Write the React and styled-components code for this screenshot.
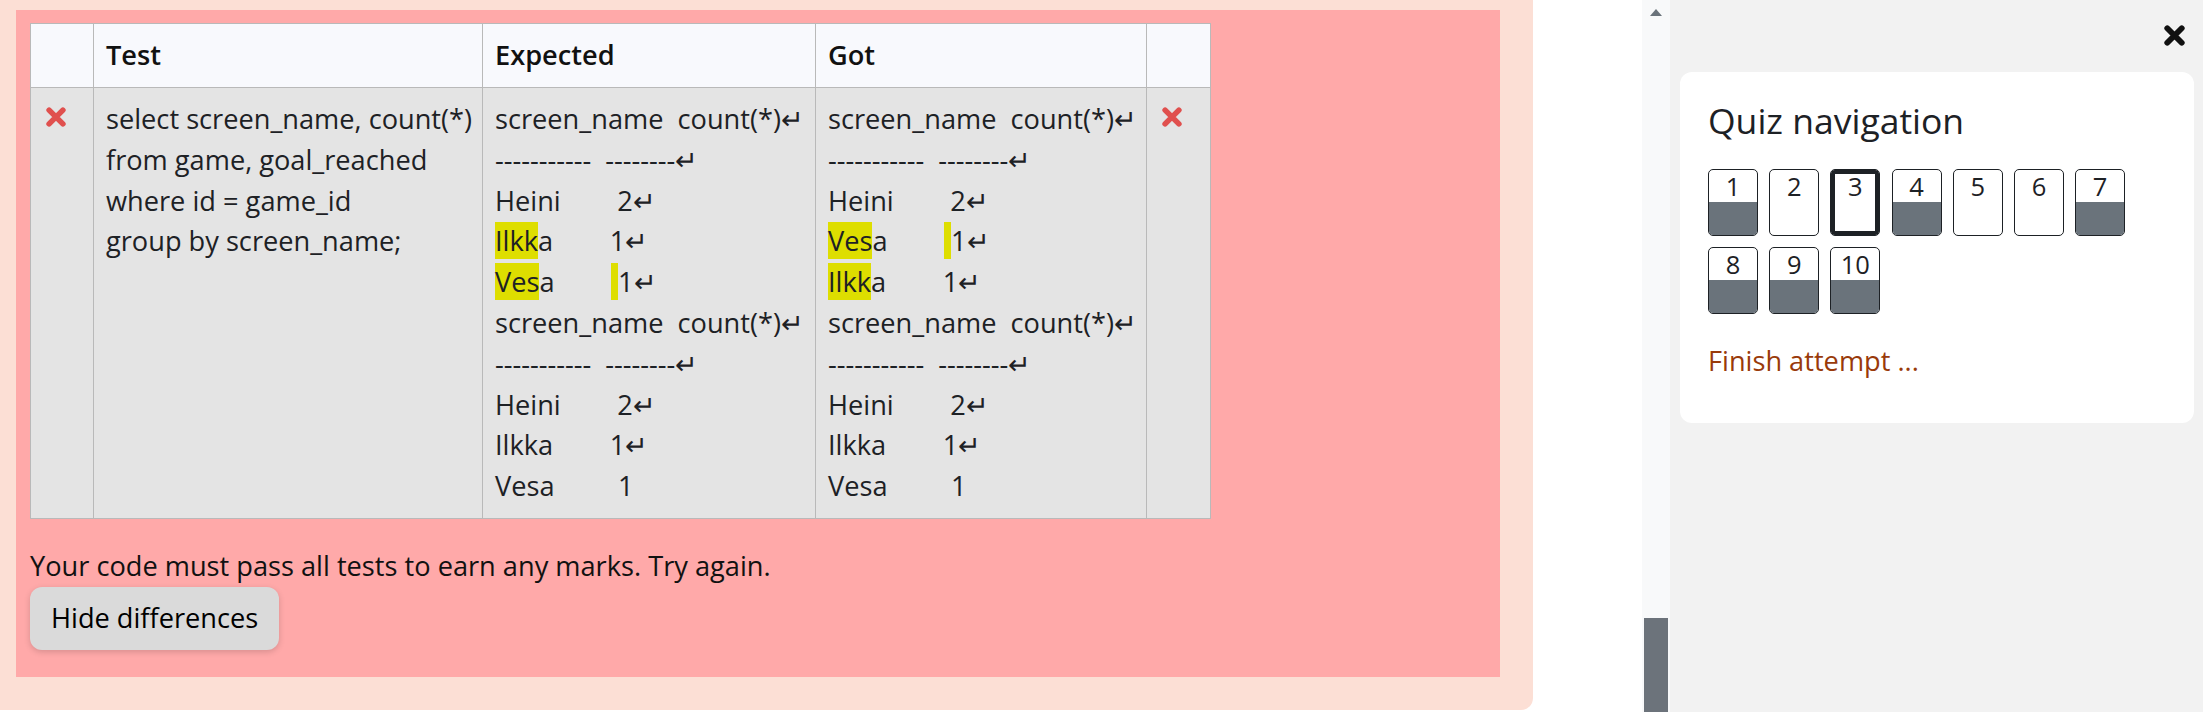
import React from 'react';
import styled, { createGlobalStyle } from 'styled-components';

const GlobalStyle = createGlobalStyle`
  html, body {
    margin: 0;
    padding: 0;
    background: #fff;
  }
  body {
    font-family: "Open Sans", "Liberation Sans", sans-serif;
    color: #1d2125;
  }
`;

const Page = styled.div`
  display: flex;
  width: 2203px;
  height: 712px;
  overflow: hidden;
`;

const Main = styled.div`
  flex: 0 0 1642px;
  background: #fff;
`;

const Outcome = styled.div`
  width: 1533px;
  height: 710px;
  box-sizing: border-box;
  padding: 10px 0 0 16px;
  background: #fcdfd5;
  border-bottom-right-radius: 12px;
`;

const Feedback = styled.div`
  width: 1484px;
  height: 667px;
  box-sizing: border-box;
  padding: 13px 14px;
  background: #ffa9a9;
  font-size: 27.2px;
  line-height: 1.5;
`;

const ResultTable = styled.table`
  border-collapse: collapse;
  table-layout: fixed;
  width: 1180px;
  font-size: 27.2px;
  line-height: 1.5;
`;

const HeadCell = styled.th`
  height: 64px;
  box-sizing: border-box;
  background: #f8f9fd;
  border: 1px solid #b9b9b9;
  padding: 0 12px;
  text-align: left;
  font-weight: 600;
  color: #111;
`;

const Cell = styled.td`
  background: #e4e4e4;
  border: 1px solid #b9b9b9;
  padding: 11px 12px;
  vertical-align: top;
  color: #1d2125;
`;

const IconLine = styled.div`
  height: 40.8px;
  display: flex;
  align-items: center;
  padding-left: 3px;
  margin-top: -2px;
`;

const Code = styled.div`
  white-space: pre;
`;

const Mark = styled.span`
  background: #dede00;
`;

const Message = styled.p`
  margin: 27px 0 0;
  color: #111;
`;

const Button = styled.button`
  display: block;
  margin: 0;
  padding: 11px 21px;
  border: none;
  border-radius: 12px;
  background: #dadada;
  font-family: inherit;
  font-size: 27.2px;
  line-height: 40.8px;
  color: #000;
  box-shadow: 0 2px 6px rgba(0, 0, 0, 0.16);
`;

const Track = styled.div`
  flex: 0 0 28px;
  background: #f8f9fa;
  display: flex;
  flex-direction: column;
  align-items: center;
`;

const ArrowUp = styled.div`
  margin-top: 9px;
  width: 0;
  height: 0;
  border-left: 6.5px solid transparent;
  border-right: 6.5px solid transparent;
  border-bottom: 7px solid #6a737b;
`;

const TrackSpace = styled.div`
  flex: 1;
`;

const Thumb = styled.div`
  width: 24px;
  height: 94px;
  background: #6c737b;
`;

const Drawer = styled.div`
  flex: 0 0 533px;
  box-sizing: border-box;
  padding: 0 9.5px 0 10px;
  background: #f2f2f2;
`;

const DrawerHeader = styled.div`
  height: 71.7px;
  display: flex;
  justify-content: flex-end;
  align-items: center;
  padding-right: 9px;
`;

const Card = styled.div`
  background: #fff;
  border-radius: 12px;
  padding: 27px 28px 42px;
`;

const Heading = styled.h2`
  margin: 0 0 28px;
  font-size: 35.5px;
  font-weight: 500;
  line-height: 1.2;
  color: #1d2125;
`;

const NavGrid = styled.div`
  display: flex;
  flex-wrap: wrap;
  gap: 11px 11.2px;
`;

const QnButton = styled.div`
  width: 50px;
  height: 67px;
  box-sizing: border-box;
  border: 1px solid #1d2125;
  border-radius: 5px;
  overflow: hidden;
  display: flex;
  flex-direction: column;
  background: #fff;
  box-shadow: ${p => (p.$current ? 'inset 0 0 0 4px #1d2125' : 'none')};
`;

const QnNumber = styled.div`
  height: 32px;
  text-align: center;
  font-size: 25.5px;
  line-height: 32px;
  color: #1d2125;
`;

const QnFill = styled.div`
  flex: 1;
  background: ${p => (p.$done ? '#6a737b' : 'transparent')};
`;

const FinishLink = styled.a`
  display: block;
  margin-top: 26.3px;
  font-size: 27.2px;
  line-height: 40.8px;
  color: #993a0a;
  text-decoration: none;
`;

const Cross = ({ color, size }) => (
  <svg width={size} height={size} viewBox="0 0 18 18">
    <path
      d="M2.8 2.8 L15.2 15.2 M15.2 2.8 L2.8 15.2"
      stroke={color}
      strokeWidth="5"
      strokeLinecap="round"
      fill="none"
    />
  </svg>
);

const expected = [
  'screen_name  count(*)↵',
  '-----------  --------↵',
  'Heini        2↵',
  '[Ilkk]a        1↵',
  '[Ves]a        [ ]1↵',
  'screen_name  count(*)↵',
  '-----------  --------↵',
  'Heini        2↵',
  'Ilkka        1↵',
  'Vesa         1',
];

const got = [
  'screen_name  count(*)↵',
  '-----------  --------↵',
  'Heini        2↵',
  '[Ves]a        [ ]1↵',
  '[Ilkk]a        1↵',
  'screen_name  count(*)↵',
  '-----------  --------↵',
  'Heini        2↵',
  'Ilkka        1↵',
  'Vesa         1',
];

const questions = [
  { n: 1, done: true },
  { n: 2 },
  { n: 3, current: true },
  { n: 4, done: true },
  { n: 5 },
  { n: 6 },
  { n: 7, done: true },
  { n: 8, done: true },
  { n: 9, done: true },
  { n: 10, done: true },
];

const DiffLine = ({ text }) => (
  <div>
    {text.split(/(\[[^\]]*\])/).filter(Boolean).map((part, i) =>
      part.startsWith('[') ? (
        <Mark key={i}>{part.slice(1, -1)}</Mark>
      ) : (
        <span key={i}>{part}</span>
      )
    )}
  </div>
);

const DiffCell = ({ lines }) => (
  <Cell>
    <Code>
      {lines.map((l, i) => (
        <DiffLine key={i} text={l} />
      ))}
    </Code>
  </Cell>
);

const App = () => (
  <Page>
    <GlobalStyle />
    <Main>
      <Outcome>
        <Feedback>
          <ResultTable>
            <colgroup>
              <col style={{ width: 63 }} />
              <col style={{ width: 389 }} />
              <col style={{ width: 333 }} />
              <col style={{ width: 331 }} />
              <col style={{ width: 64 }} />
            </colgroup>
            <thead>
              <tr>
                <HeadCell />
                <HeadCell>Test</HeadCell>
                <HeadCell>Expected</HeadCell>
                <HeadCell>Got</HeadCell>
                <HeadCell />
              </tr>
            </thead>
            <tbody>
              <tr>
                <Cell>
                  <IconLine>
                    <Cross color="#e0504e" size={20} />
                  </IconLine>
                </Cell>
                <Cell>
                  <Code>
                    {'select screen_name, count(*)\nfrom game, goal_reached\nwhere id = game_id\ngroup by screen_name;'}
                  </Code>
                </Cell>
                <DiffCell lines={expected} />
                <DiffCell lines={got} />
                <Cell>
                  <IconLine>
                    <Cross color="#e0504e" size={20} />
                  </IconLine>
                </Cell>
              </tr>
            </tbody>
          </ResultTable>
          <Message>Your code must pass all tests to earn any marks. Try again.</Message>
          <Button>Hide differences</Button>
        </Feedback>
      </Outcome>
    </Main>
    <Track>
      <ArrowUp />
      <TrackSpace />
      <Thumb />
    </Track>
    <Drawer>
      <DrawerHeader>
        <Cross color="#111" size={21} />
      </DrawerHeader>
      <Card>
        <Heading>Quiz navigation</Heading>
        <NavGrid>
          {questions.map(q => (
            <QnButton key={q.n} $current={q.current}>
              <QnNumber>{q.n}</QnNumber>
              <QnFill $done={q.done} />
            </QnButton>
          ))}
        </NavGrid>
        <FinishLink href="#">Finish attempt ...</FinishLink>
      </Card>
    </Drawer>
  </Page>
);

export default App;
